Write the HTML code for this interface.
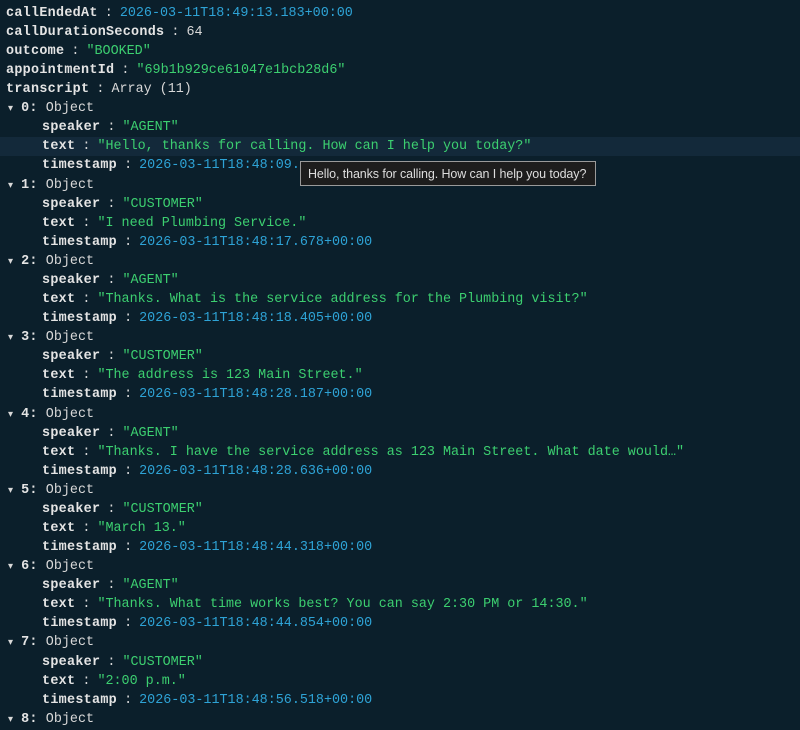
<!DOCTYPE html>
<html><head><style>
html,body{margin:0;padding:0;background:#0b1f2b;width:800px;height:723px;overflow:hidden}
body{font-family:"Liberation Mono",monospace;font-size:13.4px;color:#d8d8d8}
.r{position:absolute;left:0;width:800px;height:19px;line-height:19px;white-space:pre}
.k{font-weight:bold;color:#e4e4e4;letter-spacing:0.3px}
.c{margin:0 -1px}
.s{color:#3ccf70}
.d{color:#2ea3d6}
.n{color:#d8d8d8}
.hl{background:#13293a}
.tip{position:absolute;left:300px;top:161px;width:296px;height:25px;background:#1d1d1d;border:1px solid #9a9a9a;color:#ddd;font-family:"Liberation Sans",sans-serif;font-size:12.5px;line-height:24px;padding-left:7px;box-sizing:border-box;white-space:nowrap;letter-spacing:-0.1px}
</style></head><body>
<div id="items"></div>
<script>
var d=[["AGENT","Hello, thanks for calling. How can I help you today?","2026-03-11T18:48:09.","",],
["CUSTOMER","I need Plumbing Service.","2026-03-11T18:48:17.678+00:00"],
["AGENT","Thanks. What is the service address for the Plumbing visit?","2026-03-11T18:48:18.405+00:00"],
["CUSTOMER","The address is 123 Main Street.","2026-03-11T18:48:28.187+00:00"],
["AGENT","Thanks. I have the service address as 123 Main Street. What date would\u2026","2026-03-11T18:48:28.636+00:00"],
["CUSTOMER","March 13.","2026-03-11T18:48:44.318+00:00"],
["AGENT","Thanks. What time works best? You can say 2:30 PM or 14:30.","2026-03-11T18:48:44.854+00:00"],
["CUSTOMER","2:00 p.m.","2026-03-11T18:48:56.518+00:00"]];
var h="",y=3.8,L=19.08,C='<span class="c"> : </span>';
function row(t,c,hl){h+='<div class="r'+(hl?' hl':'')+'" style="top:'+t.toFixed(1)+'px"><span style="position:absolute;left:'+c[0]+'px">'+c[1]+'</span></div>';}
row(y,[6,'<span class="k">callEndedAt</span>'+C+'<span class="d">2026-03-11T18:49:13.183+00:00</span>']);y+=L;
row(y,[6,'<span class="k">callDurationSeconds</span>'+C+'<span class="n">64</span>']);y+=L;
row(y,[6,'<span class="k">outcome</span>'+C+'<span class="s">"BOOKED"</span>']);y+=L;
row(y,[6,'<span class="k">appointmentId</span>'+C+'<span class="s">"69b1b929ce61047e1bcb28d6"</span>']);y+=L;
row(y,[6,'<span class="k">transcript</span>'+C+'Array (11)']);y+=L;
for(var i=0;i<9;i++){
row(y,[8,'<span style="font-size:10px">\u25BE</span> <span class="k">'+i+':</span> <span>Object</span>']);y+=L;
if(i==8)break;
row(y,[42,'<span class="k">speaker</span>'+C+'<span class="s">"'+d[i][0]+'"</span>']);y+=L;
row(y,[42,'<span class="k">text</span>'+C+'<span class="s">"'+d[i][1]+'"</span>'],i==0);y+=L;
row(y,[42,'<span class="k">timestamp</span>'+C+'<span class="d">'+d[i][2]+'</span>']);y+=L;
}
document.getElementById("items").innerHTML=h;
</script>
<div class="tip">Hello, thanks for calling. How can I help you today?</div>
</body></html>
